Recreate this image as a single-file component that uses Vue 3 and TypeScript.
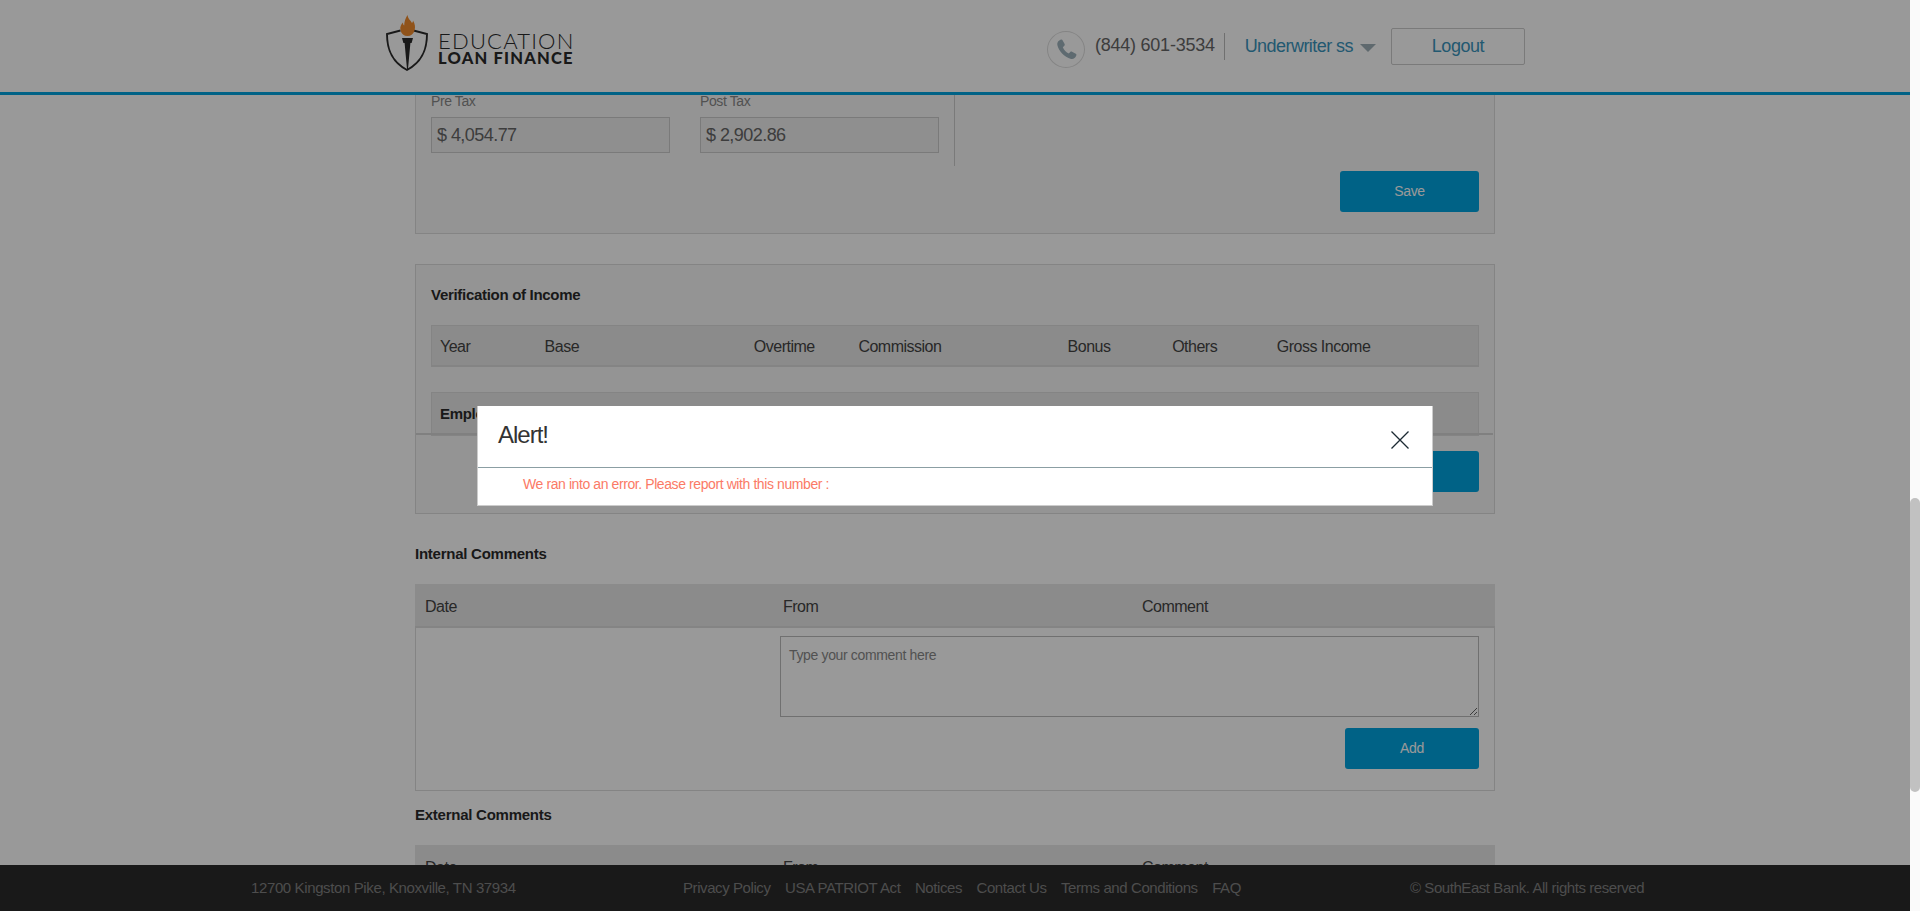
<script setup lang="ts">
const incomeCols: string[] = ["Year", "Base", "Overtime", "Commission", "Bonus", "Others", "Gross Income"];
const commentCols: string[] = ["Date", "From", "Comment"];
const footerLinks: string[] = ["Privacy Policy", "USA PATRIOT Act", "Notices", "Contact Us", "Terms and Conditions", "FAQ"];
</script>

<template>
    <div class="app">
        <div class="page">
            <header class="top">
                <div class="top-inner">
                    <div class="logo">
                        <svg class="logo-mark" width="42" height="56" viewBox="0 0 42 56">
                            <path d="M14.5 15.5 L1 19 C1 32 4 46 21 55 C38 46 41 32 41 19 L27.5 15.5" fill="none" stroke="#2b2b2b" stroke-width="1.9" />
                            <path d="M16 23 H27 L25.6 28 H24.4 L22 54 H21 L18.6 28 H17.4 Z" fill="#2b2b2b" />
                            <path d="M21.5 0 C22 4 24.5 5 26 8 C27 6.8 27 6 27 5.5 C29 9 29.5 12 28.6 15 C27.6 19 25 21 21.5 21 C18 21 15.4 19 14.5 15 C13.8 12 15 9.5 17 7.5 C17 9 17.4 10 18.2 10.6 C18.2 7 19.5 3 21.5 0 Z" fill="#f08a2c" />
                        </svg>
                        <div class="logo-text">
                            <div class="logo-top">EDUCATION</div>
                            <div class="logo-bottom">LOAN FINANCE</div>
                        </div>
                    </div>
                    <div class="top-right">
                        <span class="phone-circle">
                            <svg width="25" height="25" viewBox="0 0 24 24">
                                <path d="M6.6 2.5c.6-.3 1.3-.1 1.6.5l2 3.6c.3.6.2 1.2-.3 1.7L8.5 9.8c.9 2.4 3.3 5 5.7 6l1.4-1.4c.4-.5 1.1-.6 1.7-.3l3.6 2c.6.3.8 1 .5 1.6-.9 2.2-2.7 3.8-5 3.3C9.6 18.9 4.6 13.7 3.2 7.7 2.7 5.3 4.4 3.4 6.6 2.5z" fill="#9db1bb" />
                            </svg>
                        </span>
                        <span class="phone-no">(844) 601-3534</span>
                        <span class="user">Underwriter ss<i class="caret"></i></span>
                        <button class="logout">Logout</button>
                    </div>
                </div>
            </header>

            <main class="content">
                <section class="panel tax-panel">
                    <div class="tax-row">
                        <div class="field">
                            <label>Pre Tax</label>
                            <div class="input">$ 4,054.77</div>
                        </div>
                        <div class="field">
                            <label>Post Tax</label>
                            <div class="input">$ 2,902.86</div>
                        </div>
                    </div>
                    <div class="actions"><button class="btn">Save</button></div>
                </section>

                <section class="panel income-panel">
                    <h3 class="income-title">Verification of Income</h3>
                    <div class="income-head">
                        <span v-for="c in incomeCols" :key="c">{{ c }}</span>
                    </div>
                    <div class="employ-row">Employment</div>
                    <div class="income-foot"><button class="btn">Save</button></div>
                </section>

                <h3 class="section-title">Internal Comments</h3>
                <section class="comments">
                    <div class="comment-head">
                        <span v-for="c in commentCols" :key="c">{{ c }}</span>
                    </div>
                    <div class="comment-body">
                        <textarea class="comment-input" placeholder="Type your comment here"></textarea>
                        <button class="btn add-btn">Add</button>
                    </div>
                </section>

                <h3 class="section-title external">External Comments</h3>
                <section class="comments">
                    <div class="comment-head">
                        <span v-for="c in commentCols" :key="c">{{ c }}</span>
                    </div>
                </section>
            </main>

            <footer class="bottom">
                <span class="addr">12700 Kingston Pike, Knoxville, TN 37934</span>
                <nav class="links">
                    <a v-for="l in footerLinks" :key="l">{{ l }}</a>
                </nav>
                <span class="copy">© SouthEast Bank. All rights reserved</span>
            </footer>

            <div class="backdrop">
                <div class="modal">
                    <div class="modal-head">
                        <span class="modal-title">Alert!</span>
                        <svg class="close" width="18" height="18" viewBox="0 0 18 18">
                            <path d="M0.5 0.5 L17.5 17.5 M17.5 0.5 L0.5 17.5" stroke="#1c2a33" stroke-width="1.3" fill="none" />
                        </svg>
                    </div>
                    <div class="modal-body">We ran into an error. Please report with this number :</div>
                </div>
            </div>
        </div>
        <div class="scrollbar"><div class="thumb"></div></div>
    </div>
</template>

<style>
html,
body {
    margin: 0;
    overflow: hidden;
}
</style>

<style scoped>
.app {
    display: flex;
    height: 911px;
    font-family: "Liberation Sans", Arial, sans-serif;
    color: #333;
    background: #fff;
    overflow: hidden;
}

.page {
    position: relative;
    flex: 1;
    display: flex;
    flex-direction: column;
    min-width: 0;
}

.scrollbar {
    width: 10px;
    background: #fafafa;
}

.thumb {
    margin-top: 498px;
    height: 294px;
    background: #c1c1c1;
    border-radius: 5px;
}

.top {
    height: 92px;
    flex: none;
    background: #fff;
    border-bottom: 3px solid #00a3df;
    position: relative;
    z-index: 1;
}

.top-inner {
    width: 1140px;
    height: 92px;
    margin: 0 auto;
    padding-left: 1px;
    box-sizing: border-box;
    display: flex;
    align-items: center;
    justify-content: space-between;
}

.logo {
    display: flex;
    align-items: center;
    gap: 10px;
}

.logo-mark {
    margin-top: -6px;
}

.logo-text {
    margin-top: 4px;
    color: #2b2b2b;
    font-family: Lato, sans-serif;
    white-space: nowrap;
}

.logo-top {
    font-size: 22px;
    font-weight: 300;
    line-height: 20px;
    letter-spacing: 1.2px;
}

.logo-bottom {
    font-size: 16.5px;
    font-weight: 900;
    line-height: 15px;
    letter-spacing: 1.2px;
}

.top-right {
    display: flex;
    align-items: center;
    margin-top: 0;
}

.phone-circle {
    width: 36px;
    height: 35px;
    border: 1px solid #ddd;
    border-radius: 50%;
    display: flex;
    align-items: center;
    justify-content: center;
    margin-top: 6px;
}

.phone-no {
    margin-left: 10px;
    padding-right: 9px;
    border-right: 1px solid #bbb;
    height: 27px;
    line-height: 25px;
    font-size: 18px;
    letter-spacing: -0.25px;
    color: #666;
}

.user {
    margin-left: 20px;
    font-size: 18px;
    letter-spacing: -0.55px;
    color: #3a94bc;
    display: flex;
    align-items: center;
}

.caret {
    width: 0;
    height: 0;
    margin-left: 7px;
    margin-top: 3px;
    border-left: 8px solid transparent;
    border-right: 8px solid transparent;
    border-top: 8px solid #9fb0b8;
}

.logout {
    width: 134px;
    height: 37px;
    margin-left: 15px;
    padding: 0;
    background: #fff;
    border: 1px solid #ccc;
    border-radius: 2px;
    font: 18px "Liberation Sans", Arial, sans-serif;
    letter-spacing: -0.45px;
    color: #3a94bc;
}

.content {
    flex: 1;
    min-height: 0;
    overflow: hidden;
    width: 1080px;
    margin: 0 auto;
}

.panel {
    border: 1px solid #ddd;
    background: #f7f7f7;
}

.tax-panel {
    border-top: 0;
    height: 139px;
    padding: 0 15px;
    box-sizing: border-box;
}

.tax-row {
    display: flex;
    gap: 30px;
    width: 524px;
    height: 71px;
    border-right: 1px solid #ccc;
    box-sizing: border-box;
}

.field {
    width: 239px;
}

.field label {
    display: block;
    height: 22px;
    font-size: 14px;
    line-height: 13px;
    letter-spacing: -0.4px;
    color: #888;
}

.input {
    height: 36px;
    box-sizing: border-box;
    padding-left: 5px;
    border: 1px solid #ccc;
    background: #eee;
    font-size: 18px;
    line-height: 34px;
    letter-spacing: -0.55px;
    color: #666;
}

.actions {
    display: flex;
    justify-content: flex-end;
    margin-top: 5px;
}

.btn {
    width: 139px;
    height: 41px;
    padding: 0 0 2px;
    border: 0;
    border-radius: 3px;
    background: #00a3df;
    color: #fff;
    font: 14px "Liberation Sans", Arial, sans-serif;
    letter-spacing: -0.3px;
}

.income-panel {
    margin-top: 30px;
    height: 250px;
    box-sizing: border-box;
    padding: 0 0 0 15px;
}

.income-title {
    margin: 0;
    height: 60px;
    font-size: 15px;
    font-weight: 700;
    line-height: 60px;
    letter-spacing: -0.3px;
    color: #2b2b2b;
}

.income-head {
    display: grid;
    grid-template-columns: 10% 20% 10% 20% 10% 10% 20%;
    width: 1048px;
    height: 42px;
    box-sizing: border-box;
    border: 1px solid #ddd;
    border-bottom-width: 2px;
    background: #e8e8e8;
    font-size: 16px;
    line-height: 41px;
    letter-spacing: -0.5px;
    color: #444;
}

.income-head span {
    padding-left: 8px;
}

.employ-row {
    width: 1048px;
    height: 44px;
    margin-top: 25px;
    box-sizing: border-box;
    padding-left: 8px;
    border: 1px solid #ddd;
    background: #e8e8e8;
    font-size: 15px;
    font-weight: 700;
    line-height: 41px;
    letter-spacing: -0.3px;
    color: #2b2b2b;
}

.income-foot {
    display: flex;
    justify-content: flex-end;
    margin: -3px 1px 0 -15px;
    padding: 16px 14px 0 0;
    border-top: 2px solid #d5d5d5;
}

.section-title {
    margin: 0;
    height: 70px;
    font-size: 15px;
    font-weight: 700;
    line-height: 80px;
    letter-spacing: -0.25px;
    color: #2b2b2b;
}

.section-title.external {
    height: 54px;
    line-height: 48px;
}

.comment-head {
    display: grid;
    grid-template-columns: repeat(3, 1fr);
    height: 44px;
    box-sizing: border-box;
    border-bottom: 2px solid #dcdcdc;
    background: #e8e8e8;
    font-size: 16px;
    line-height: 45px;
    letter-spacing: -0.5px;
    color: #444;
}

.comment-head span {
    padding-left: 10px;
}

.comment-head span:nth-child(2) {
    padding-left: 8px;
}

.comment-head span:nth-child(3) {
    padding-left: 7px;
}

.comment-body {
    height: 163px;
    box-sizing: border-box;
    border: 1px solid #ddd;
    border-top: 0;
    padding: 8px 15px 0 0;
    display: flex;
    flex-direction: column;
    align-items: flex-end;
}

.comment-input {
    display: block;
    width: 699px;
    height: 81px;
    box-sizing: border-box;
    padding: 10px 8px;
    border: 1px solid #bbb;
    background: #fff;
    font: 14px "Liberation Sans", Arial, sans-serif;
    letter-spacing: -0.35px;
    margin: 0;
}

.comment-input::placeholder {
    color: #888;
    opacity: 1;
}

.add-btn {
    width: 134px;
    margin-top: 11px;
}

.bottom {
    position: relative;
    flex: none;
    height: 46px;
    background: #2b2b2b;
    color: #808080;
    font-size: 15px;
    line-height: 46px;
    letter-spacing: -0.38px;
    white-space: nowrap;
    display: flex;
    padding-left: 251px;
}

.addr {
    width: 432px;
}

.links {
    display: flex;
    gap: 14.5px;
    width: 727px;
    letter-spacing: -0.42px;
}

.copy {
    letter-spacing: -0.44px;
}

.backdrop {
    position: absolute;
    inset: 0;
    z-index: 5;
    background: rgba(0, 0, 0, 0.4);
    display: flex;
    justify-content: center;
    align-items: flex-start;
}

.modal {
    width: 956px;
    height: 100px;
    margin-top: 406px;
    box-sizing: border-box;
    background: #fff;
    border: 1px solid #ccc;
    border-top-width: 0;
}

.modal-head {
    height: 62px;
    box-sizing: border-box;
    border-bottom: 1px solid #8b9ea3;
    padding: 0 23px 0 20px;
    display: flex;
    align-items: center;
    justify-content: space-between;
}

.modal-title {
    font-size: 24px;
    letter-spacing: -1px;
    color: #333;
    margin-top: -3px;
}

.close {
    margin-top: 6px;
}

.modal-body {
    padding-left: 45px;
    font-size: 14px;
    line-height: 32px;
    letter-spacing: -0.41px;
    color: #fb7a66;
}
</style>
